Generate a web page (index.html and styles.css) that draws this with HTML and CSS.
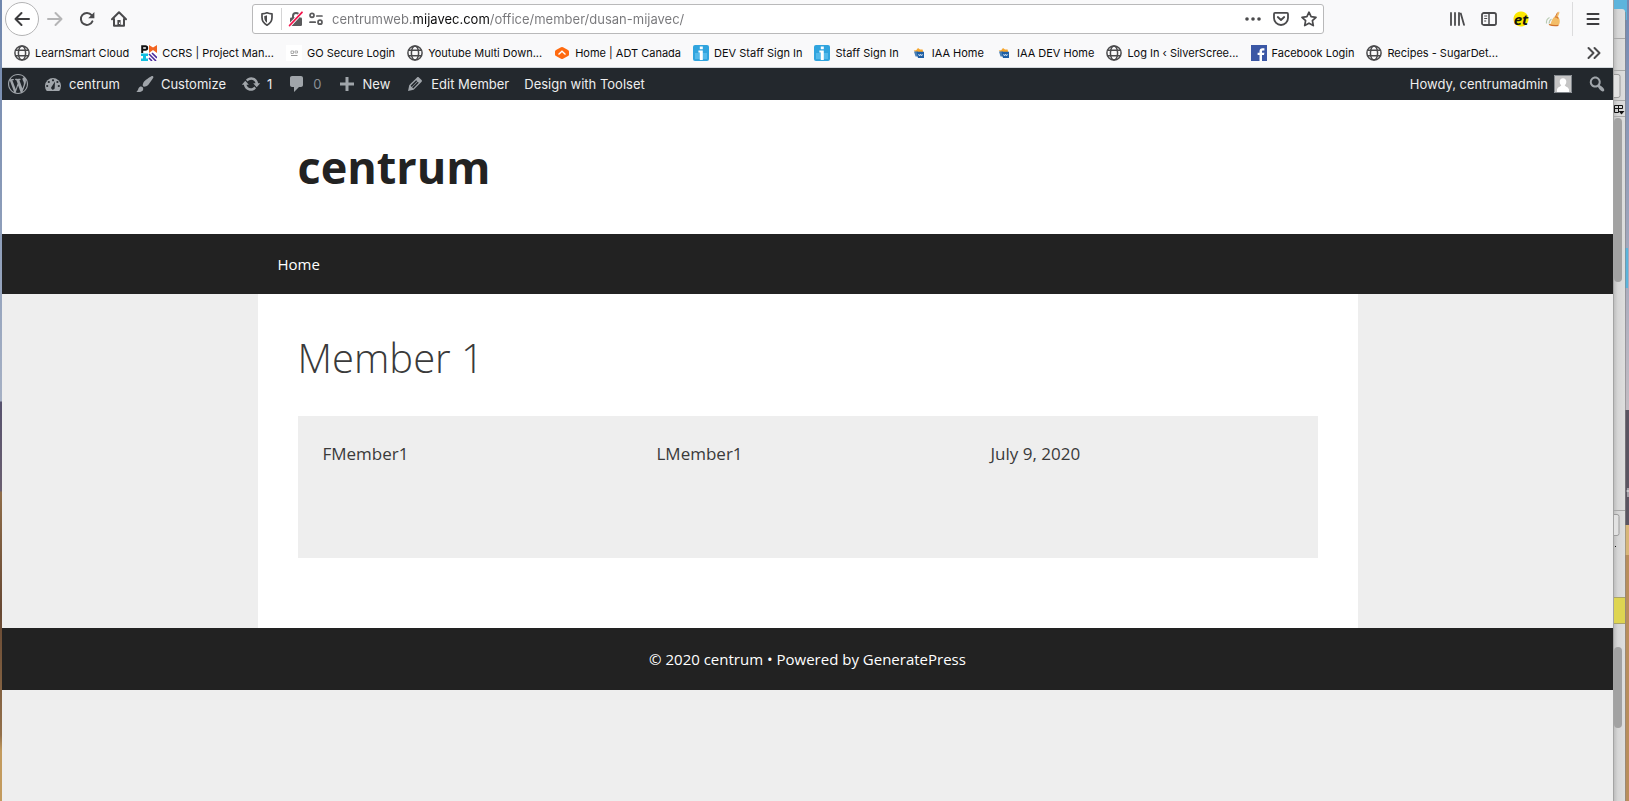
FILE: index.html
```html
<!DOCTYPE html>
<html lang="en">
<head>
  <meta charset="UTF-8">
  <meta name="viewport" content="width=device-width, initial-scale=1.0">
  <title>Member 1 - centrum</title>
  <link rel="stylesheet" href="styles.css">
</head>
<body>
  <svg class="defs" aria-hidden="true">
    <symbol id="globe" viewBox="0 0 16 16">
      <g fill="none" stroke="#4a4a4c" stroke-width="1.5">
        <circle cx="8" cy="8" r="7.1"/>
        <ellipse cx="8" cy="8" rx="3.6" ry="7.1"/>
        <path d="M1.6 5.3h12.8M1.6 10.7h12.8"/>
      </g>
    </symbol>
    <symbol id="info" viewBox="0 0 16 16">
      <rect width="16" height="16" rx="2" fill="#30a4de"/>
      <path d="M2 8h12v6H2z" fill="#53b9ea"/>
      <path d="M6.8 1.6h3v2.6h-3zM5.4 5.6h4.4V15H6.8V7.6H5.4z" fill="#fff"/>
    </symbol>
    <symbol id="iaa" viewBox="0 0 16 16">
      <path d="M7 3l2 1.6 2.6-.2.6 3H5L2.600 5.600l2.600-.4z" fill="#f6a52c"/>
      <path d="M3 6.500h4v5H4.500z" fill="#477fb5"/>
      <path d="M5.500 6.800H13V13H7z" fill="#1f5fa5"/>
      <path d="M7.500 9l1 2 1-2 1 2 1-2" fill="none" stroke="#dce8f4" stroke-width=".8"/>
    </symbol>
  </svg>

  <div class="desktop">
    <div class="browser">
      <div class="toolbar">
        <button class="tool back" aria-label="Back">
          <svg width="16" height="16" viewBox="0 0 16 16"><path d="M15 8H1.500M7.500 2L1.500 8l6 6" fill="none" stroke="#3d3d3f" stroke-width="2" stroke-linecap="round" stroke-linejoin="round"/></svg>
        </button>
        <button class="tool" aria-label="Forward" disabled>
          <svg width="16" height="16" viewBox="0 0 16 16"><path d="M1 8h13.500M8.500 2l6 6-6 6" fill="none" stroke="#b5b5b6" stroke-width="2" stroke-linecap="round" stroke-linejoin="round"/></svg>
        </button>
        <button class="tool" aria-label="Reload">
          <svg width="16" height="16" viewBox="0 0 16 16"><path d="M13.400 10.300A6 6 0 1 1 12.600 4.200" fill="none" stroke="#4a4a4c" stroke-width="2" stroke-linecap="round"/><path d="M15.400 1v6.300H9.200z" fill="#4a4a4c"/></svg>
        </button>
        <button class="tool" aria-label="Home">
          <svg width="16" height="16" viewBox="0 0 16 16"><path d="M1 8.300L8 1.300l7 7M3 8v6.800h10V8" fill="none" stroke="#4a4a4c" stroke-width="2" stroke-linecap="round" stroke-linejoin="round"/><path d="M6.400 9h3.200v6H6.400z" fill="#4a4a4c"/><path d="M8 11.500h1V13H8z" fill="#fff"/></svg>
        </button>
        <span class="spring"></span>
        <div class="urlbar">
          <button class="url-btn shield" aria-label="Tracking protection">
            <svg width="16" height="16" viewBox="0 0 16 16"><path d="M8 1.800c1.700.8 3.300 1 5 1v3.800c0 3.500-1.700 6-5 7.600-3.300-1.600-5-4.100-5-7.600V2.800c1.700 0 3.300-.2 5-1z" fill="none" stroke="#4a4a4c" stroke-width="1.700" stroke-linejoin="round"/><path d="M8 4.300v7.400c-1.800-1.200-2.700-2.900-2.700-5V4.900C6.300 4.900 7.200 4.700 8 4.300z" fill="#4a4a4c"/></svg>
          </button>
          <button class="url-btn" aria-label="Connection is not secure">
            <svg width="16" height="16" viewBox="0 0 16 16"><path d="M5 7V5a3 3 0 0 1 6 0v2" fill="none" stroke="#5a5a5c" stroke-width="2"/><rect x="2" y="6.500" width="12" height="8.500" rx="1.200" fill="#5a5a5c"/><path d="M1.600 14.500L14 1.300" stroke="#fff" stroke-width="3.400"/><path d="M1.600 14.500L14 1.300" stroke="#f3144c" stroke-width="1.800" stroke-linecap="round"/></svg>
          </button>
          <button class="url-btn" aria-label="Permissions">
            <svg width="16" height="16" viewBox="0 0 16 16"><g fill="none" stroke="#5a5a5c" stroke-width="1.700" stroke-linecap="round"><circle cx="4" cy="4.300" r="2"/><path d="M8.800 5h5.200M2 11.200h5.200"/><circle cx="12" cy="11.200" r="2"/></g></svg>
          </button>
          <input class="url" type="text" aria-label="Address" value="centrumweb.mijavec.com/office/member/dusan-mijavec/">
          <button class="url-btn wide" aria-label="Page actions">
            <svg width="16" height="16" viewBox="0 0 16 16" fill="#4a4a4c"><circle cx="2" cy="8" r="1.800"/><circle cx="8" cy="8" r="1.800"/><circle cx="14" cy="8" r="1.800"/></svg>
          </button>
          <button class="url-btn wide" aria-label="Save to Pocket">
            <svg width="16" height="16" viewBox="0 0 16 16" fill="none" stroke="#4a4a4c" stroke-width="1.800" stroke-linecap="round" stroke-linejoin="round"><path d="M2 1.900h12c.6 0 1 .4 1 1V7a7 7 0 0 1-14 0V2.900c0-.6.4-1 1-1z"/><path d="M4.800 6L8 9l3.200-3"/></svg>
          </button>
          <button class="url-btn wide" aria-label="Bookmark this page">
            <svg width="16" height="16" viewBox="0 0 16 16"><path d="M8 1.200l2.100 4.500 4.900.6-3.600 3.400.9 4.900L8 12.200l-4.300 2.400.9-4.900L1 6.300l4.900-.6z" fill="none" stroke="#4a4a4c" stroke-width="1.700" stroke-linejoin="round"/></svg>
          </button>
        </div>
        <span class="spring"></span>
        <button class="tool" aria-label="Library">
          <svg width="16" height="16" viewBox="0 0 16 16"><path d="M2 2v12M6 2v12M10 2v12M11.800 2.500l3.200 11.300" fill="none" stroke="#4a4a4c" stroke-width="1.800" stroke-linecap="round"/></svg>
        </button>
        <button class="tool" aria-label="Sidebars">
          <svg width="16" height="16" viewBox="0 0 16 16"><g fill="none" stroke="#4a4a4c"><rect x="1" y="2" width="14" height="12" rx="1.800" stroke-width="1.800"/><path d="M8 2v12" stroke-width="1.500"/><path d="M3.200 5h3M3.200 7.500h3M3.200 10h2" stroke-width="1.200"/></g></svg>
        </button>
        <button class="tool et" aria-label="Extension et">et</button>
        <button class="tool" aria-label="Cleaner extension">
          <svg width="16" height="16" viewBox="0 0 16 16"><path d="M13.800.6c.6.400.7 1 .5 1.700l-1.300 3.200c1.500 1.700 2.200 4 1.600 6.600-.2 1.200-.8 2-1.600 2.500-3 .7-6.600.4-9.500-.9 1.500-.1 2-.6 2.400-1.600.6-2.800 2-5.600 4.300-6.700z" fill="#f3bd68"/><path d="M9.800 6c1.300-.3 2.700.3 3.400 1.500M4 13.500c3 1.200 6.200 1.500 9.400.9" stroke="#d2732e" stroke-width="1.200" fill="none"/><path d="M12.500 1.500L10.800 5" stroke="#d9813a" fill="none"/><path d="M4.500 6.500c-2 1-3.300 3.200-3 6M6.500 8c-1.700 1-2.400 2.600-2.300 4.600" stroke="#b9cbb4" stroke-width="1.200" fill="none"/></svg>
        </button>
        <button class="tool menu" aria-label="Open menu">
          <svg width="16" height="16" viewBox="0 0 16 16"><path d="M2.500 3h11M2.500 8h11M2.500 13h11" stroke="#3d3d3f" stroke-width="2" stroke-linecap="round"/></svg>
        </button>
      </div>

      <nav class="bookmarks" aria-label="Bookmarks">
        <a href="#"><svg><use href="#globe"/></svg>LearnSmart Cloud</a>
        <a href="#"><svg viewBox="0 0 16 16"><path fill="#fff" d="M0 0h16v16H0z"/><path d="M1.200 8V1.200h3.200a1.700 1.700 0 0 1 0 3.600H1.200" fill="none" stroke="#111" stroke-width="2"/><path d="M8 0l4 2.500L16 0v8l-4-3-4 3z" fill="#f26522"/><path d="M0 8.500h7V11H5v2.500h2V16H0v-2.500h2V11H0z" fill="#12bfe0"/><path d="M8 9l7 7M8 13l3 3M11 8l5 5" stroke="#4a2a9c" stroke-width="1.600"/></svg>CCRS | Project Man...</a>
        <a href="#"><svg viewBox="0 0 16 16"><path fill="#fff" d="M0 0h16v16H0z"/><path d="M5 6h2.500v2.500H5zM9 6h2.500v2H9z" fill="none" stroke="#999" stroke-width=".8"/><path d="M5 10.500h6.500" stroke="#999"/></svg>GO Secure Login</a>
        <a href="#"><svg><use href="#globe"/></svg>Youtube Multi Down...</a>
        <a href="#"><svg viewBox="0 0 16 16"><path d="M7 2.200q1-.5 2 0l5 2.700q1 .5 1 1.600v3q0 1.100-1 1.600l-5 2.700q-1 .5-2 0l-5-2.700q-1-.5-1-1.600v-3q0-1.100 1-1.600z" fill="#ff6a0f"/><path d="M4.500 9.500L8 6.300l3.500 3.200" fill="none" stroke="#fff" stroke-width="1.400"/></svg>Home | ADT Canada</a>
        <a href="#"><svg><use href="#info"/></svg>DEV Staff Sign In</a>
        <a href="#"><svg><use href="#info"/></svg>Staff Sign In</a>
        <a href="#"><svg><use href="#iaa"/></svg>IAA Home</a>
        <a href="#"><svg><use href="#iaa"/></svg>IAA DEV Home</a>
        <a href="#"><svg><use href="#globe"/></svg>Log In ‹ SilverScree...</a>
        <a href="#"><svg viewBox="0 0 16 16"><path fill="#3b57a5" d="M0 0h16v16H0z"/><path d="M8.500 16V10H6.600V7.800h1.900V6.300c0-2 1.100-3 2.900-3H13.400v2.200h-1.200c-1 0-1.200.4-1.200 1.100v1.200h2.400L13 10h-2v6z" fill="#fff"/></svg>Facebook Login</a>
        <a href="#"><svg><use href="#globe"/></svg>Recipes - SugarDet...</a>
        <button class="tool more" aria-label="More bookmarks">
          <svg width="16" height="16" viewBox="0 0 16 16"><path d="M2.500 3l5 5-5 5M8.500 3l5 5-5 5" fill="none" stroke="#4a4a4c" stroke-width="2" stroke-linecap="round" stroke-linejoin="round"/></svg>
        </button>
      </nav>

      <div class="adminbar">
        <a href="#" class="wp" aria-label="About WordPress"><svg viewBox="0 0 20 20"><path d="M20 10c0-5.510-4.490-10-10-10C4.480 0 0 4.490 0 10c0 5.520 4.480 10 10 10 5.510 0 10-4.480 10-10zM7.780 15.370L4.370 6.220c.55-.02 1.170-.08 1.170-.08.5-.06.44-1.130-.06-1.110 0 0-1.450.11-2.370.11-.18 0-.37 0-.58-.01C4.120 2.690 6.870 1.110 10 1.110c2.330 0 4.450.87 6.050 2.340-.68-.11-1.650.39-1.650 1.580 0 .74.45 1.360.9 2.100.35.61.55 1.360.55 2.460 0 1.490-1.400 5-1.400 5l-3.030-8.370c.54-.02.82-.17.82-.17.5-.05.44-1.250-.06-1.220 0 0-1.440.12-2.380.12-.87 0-2.330-.12-2.330-.12-.5-.03-.56 1.200-.06 1.220l.92.08 1.260 3.410zM17.410 10c.24-.64.74-1.870.43-4.250.7 1.290 1.050 2.710 1.050 4.250 0 3.290-1.730 6.240-4.400 7.780.97-2.590 1.940-5.200 2.920-7.780zM6.100 18.090C3.120 16.650 1.110 13.530 1.110 10c0-1.300.23-2.480.72-3.590C3.250 10.300 4.670 14.200 6.100 18.090zm4.030-6.630l2.580 6.980c-.86.29-1.760.45-2.710.45-.79 0-1.570-.11-2.290-.33.81-2.380 1.620-4.740 2.420-7.100z"/></svg></a>
        <a href="#"><svg viewBox="0 0 20 20"><path d="M3.760 17h12.480A8 8 0 1 0 3.760 17z"/><g fill="#23282d"><circle cx="10" cy="6.300" r="1.100"/><circle cx="5.800" cy="8" r="1.100"/><circle cx="4.200" cy="12" r="1.100"/><circle cx="15.800" cy="12" r="1.100"/><circle cx="14.400" cy="8" r="1.100"/><path d="M12 7.500l-.3 6.200a1.800 1.800 0 1 1-2.900-1.300z"/></g></svg>centrum</a>
        <a href="#"><svg viewBox="0 0 20 20"><path d="M18.330 3.570s.27-.8-.31-1.360c-.53-.52-1.220-.24-1.220-.24-.61.3-5.760 3.470-7.670 5.570-.86.96-2.060 3.790-1.090 4.820.92.98 3.960-.17 4.790-1 2.060-2.060 5.210-7.170 5.500-7.790zM1.400 17.650c2.370-1.560 1.460-3.410 3.230-4.640.93-.65 2.220-.62 3.080.29.63.67.8 2.570-.16 3.460-1.570 1.450-4 1.550-6.150.89z"/></svg>Customize</a>
        <a href="#"><svg viewBox="0 0 20 20"><path d="M10.200 3.280c3.530 0 6.430 2.610 6.920 6h2.080l-3.500 4-3.500-4h2.320c-.45-1.970-2.210-3.450-4.320-3.450-1.450 0-2.730.71-3.540 1.780L4.950 5.660C6.230 4.200 8.110 3.280 10.200 3.280zm-.4 13.440c-3.520 0-6.430-2.610-6.920-6H.8l3.500-4c1.170 1.330 2.330 2.670 3.500 4H5.480c.45 1.970 2.210 3.450 4.320 3.450 1.450 0 2.730-.71 3.540-1.780l1.710 1.950c-1.280 1.460-3.150 2.380-5.250 2.380z"/></svg>1</a>
        <a href="#" class="muted"><svg viewBox="0 0 20 20"><path d="M5 2h9c1.100 0 2 .9 2 2v7c0 1.100-.9 2-2 2h-2l-5 5v-5H5c-1.100 0-2-.9-2-2V4c0-1.100.9-2 2-2z"/></svg>0</a>
        <a href="#"><svg viewBox="0 0 20 20"><path d="M8.500 3h3v5.500H17v3h-5.500V17h-3v-5.500H3v-3h5.500z"/></svg>New</a>
        <a href="#"><svg viewBox="0 0 20 20"><path d="M13.890 3.390l2.710 2.720c.46.46.42 1.240.03 1.640l-8.010 8.020-5.560 1.160 1.160-5.580s7.600-7.630 7.990-8.030c.39-.39 1.220-.39 1.680.07zm-2.730 2.790l-5.590 5.610 1.110 1.110 5.540-5.650zm-2.970 8.230l5.580-5.600-1.070-1.080-5.590 5.600z"/></svg>Edit Member</a>
        <a href="#">Design with Toolset</a>
        <a href="#" class="account">Howdy, centrumadmin
          <svg class="avatar" viewBox="0 0 18 18"><path fill="#c5c5c5" d="M0 0h18v18H0z"/><path d="M9 3.200c2 0 3.300 1.400 3.300 3.500 0 1.500-.6 2.800-1.500 3.500 0 1.400 3.700 1.500 4.200 4.400V17H3v-2.400c.5-2.900 4.200-3 4.200-4.400-.9-.7-1.500-2-1.500-3.500 0-2.100 1.300-3.500 3.300-3.500z" fill="#fff"/><path d="M.5.5h17v17H.5z" fill="none" stroke="#82878c"/></svg>
        </a>
        <button class="search" aria-label="Search">
          <svg viewBox="0 0 20 20"><path d="M12.140 4.180c1.870 1.870 2.110 4.750.72 6.890.12.1.22.21.36.31.2.16.47.36.81.59.34.24.56.39.66.47.42.31.73.57.94.78.32.32.6.65.84 1 .25.35.44.69.59 1.040.14.35.21.68.18 1-.02.32-.14.59-.36.81s-.49.34-.81.36c-.31.02-.65-.04-.99-.19-.35-.14-.7-.34-1.040-.59-.35-.24-.68-.52-1-.84-.21-.21-.47-.52-.77-.93-.1-.13-.25-.35-.47-.66-.22-.32-.4-.57-.56-.78-.16-.2-.29-.35-.44-.5-2.070 1.090-4.690.76-6.440-.98-2.140-2.150-2.140-5.640 0-7.780 2.150-2.150 5.630-2.150 7.780 0zm-1.410 6.360c1.360-1.370 1.360-3.580 0-4.950-1.370-1.370-3.590-1.370-4.950 0-1.370 1.370-1.370 3.580 0 4.950 1.360 1.370 3.580 1.370 4.950 0z"/></svg>
        </button>
      </div>

      <div class="page">
        <header class="site-header">
          <div class="container">
            <a href="#" class="site-title">centrum</a>
          </div>
        </header>
        <nav class="main-nav">
          <div class="container">
            <a href="#">Home</a>
          </div>
        </nav>
        <main class="container content">
          <h1>Member 1</h1>
          <div class="member-grid">
            <div>FMember1</div>
            <div>LMember1</div>
            <div>July 9, 2020</div>
          </div>
        </main>
        <footer class="site-info">
          © 2020 centrum • Powered by <a href="#">GeneratePress</a>
        </footer>
      </div>
    </div>

    <!-- edge of the windows behind the browser -->
    <svg class="behind" width="16" height="801" viewBox="0 0 16 801" aria-hidden="true">
      <defs>
        <linearGradient id="sky" x2="0" y2="1"><stop offset="0" stop-color="#7288b2"/><stop offset="1" stop-color="#c3bcc3"/></linearGradient>
        <linearGradient id="edge"><stop offset="0" stop-color="#b9b9b9"/><stop offset=".4" stop-color="#d6d6d6"/><stop offset="1" stop-color="#dedede"/></linearGradient>
      </defs>
      <path fill="url(#sky)" d="M0 0h16v410H0z"/>
      <path fill="#5b5562" d="M12 410h4v115h-4z"/>
      <path fill="#b98e5c" d="M12 525h4v276h-4z"/>
      <path fill="#d8b679" d="M12 525h4v30h-4z"/>
      <path fill="#5db4dc" d="M0 0h14v20H0zM12 248h3v40h-3z"/>
      <path fill="url(#edge)" d="M0 9h9q3 0 3 3v789H0z"/>
      <path d="M0 38.500h12M0 70.500h12M0 100.500h12M0 116.500h12M0 510.500h12" stroke="#a9a9a9"/>
      <path d="M0 74.500h5q2 0 2 2v19q0 2-2 2H0M0 514.500h4q2 0 2 2v17q0 2-2 2H0" fill="#e2e2e2" stroke="#9c9c9c"/>
      <path d="M1.500 105.500h8v3M1.500 105.500v7h4M1.500 108.500h8M5.500 105.500v7" fill="none" stroke="#111"/>
      <path d="M5.500 111h6l-3 3.500z" fill="#111"/>
      <rect x="1" y="118" width="8" height="164" rx="4" fill="#a2a2a2"/>
      <path fill="#ded551" d="M0 597h12v27H0z"/>
      <path d="M0 597.500h12M0 623.500h12" stroke="#aaa468"/>
      <rect x="1" y="647" width="8" height="81" rx="4" fill="#a2a2a2"/>
      <path fill="#111" d="M2 546h1v1H2z"/>
      <path d="M13.500 491h2.500M15 488v9" stroke="#eee"/>
      <path d="M.5 0v801" stroke="#a4a4a4"/>
      <path d="M12.500 12v789" stroke="#858585" stroke-opacity=".6"/>
    </svg>
  </div>
</body>
</html>
```

FILE: styles.css
```css
* {
  box-sizing: border-box;
}
body {
  margin: 0;
  font-family: "Open Sans", sans-serif;
  color: #3a3a3a;
}
a {
  color: inherit;
  text-decoration: none;
}
button {
  padding: 0;
  border: none;
  background: none;
  font: inherit;
}
svg {
  flex: none;
}
.defs {
  position: absolute;
  width: 0;
  height: 0;
}

/* desktop and window */
.desktop {
  display: flex;
  min-height: 100vh;
  padding-left: 2px;
  background: linear-gradient(#6f86ad 0, #a5b0c4 401px, #57526e 402px, #6a5f70 491px, #8f6d49 492px, #674833 610px, #93704a 735px, #c39b5e 751px);
}
.browser {
  flex: 1;
  min-width: 0;
  display: flex;
  flex-direction: column;
}
.behind {
  display: block;
}

/* toolbar */
.toolbar {
  display: flex;
  align-items: center;
  height: 38px;
  padding: 0 0 0 3px;
  background: #f9f9fa;
}
.tool {
  display: flex;
  align-items: center;
  justify-content: center;
  flex: none;
  width: 32px;
  height: 34px;
}
.back {
  width: 34px;
  border: 1px solid #b4b4b5;
  border-radius: 50%;
  background: #fff;
}
.spring {
  flex: 0 1 117px;
}
.urlbar {
  display: flex;
  align-items: center;
  flex: 1;
  height: 30px;
  border: 1px solid #b9b9ba;
  border-radius: 3px;
  background: #fff;
}
.url-btn {
  display: flex;
  align-items: center;
  justify-content: center;
  flex: none;
  width: 20px;
  height: 22px;
}
.url-btn.wide {
  width: 28px;
}
.url-btn.shield {
  width: 29px;
  margin-right: 4px;
  border-right: 1px solid #d4d4d5;
}
.url {
  flex: 1;
  min-width: 0;
  margin-left: 6px;
  padding: 0;
  border: none;
  outline: none;
  font: 13px Inter, sans-serif;
  /* the domain is darker than the rest of the address */
  color: transparent;
  background: linear-gradient(90deg, #77777a 81px, #0c0c0d 81px, #0c0c0d 158px, #77777a 158px);
  background-clip: text;
  -webkit-background-clip: text;
}
.et {
  background: radial-gradient(circle, #fbe800 7px, transparent 8px);
  font: italic bold 15px "Open Sans", sans-serif;
  color: #111;
}
.menu {
  width: 41px;
  margin-left: 3px;
  border-left: 1px solid #dcdcdd;
}

/* bookmarks */
.bookmarks {
  display: flex;
  align-items: center;
  height: 30px;
  padding: 0 3px 0 12px;
  border-bottom: 1px solid #d3d8dc;
  background: #f9f9fa;
  font: 11px Inter, sans-serif;
  color: #0c0c0d;
  gap: 12px;
}
.bookmarks a {
  display: flex;
  align-items: center;
  gap: 5px;
  white-space: nowrap;
}
.bookmarks a svg {
  width: 16px;
  height: 16px;
}
.more {
  margin-left: auto;
}

/* wordpress admin bar */
.adminbar {
  display: flex;
  align-items: center;
  height: 32px;
  padding: 0 6px;
  background: #23282d;
  font: 13px Inter, sans-serif;
  color: #eee;
  gap: 15px;
}
.adminbar a {
  display: flex;
  align-items: center;
  gap: 6px;
  white-space: nowrap;
}
.adminbar svg {
  width: 20px;
  height: 20px;
  fill: #a0a5aa;
}
.adminbar .muted {
  color: #8b9095;
}
.adminbar .account {
  margin-left: auto;
}
.adminbar .avatar {
  width: 18px;
  height: 18px;
}
.search {
  display: flex;
}

/* site */
.page {
  flex: 1;
  background: #eee;
}
.container {
  width: 100%;
  max-width: 1100px;
  margin: 0 auto;
}
.site-header {
  background: #fff;
}
.site-header .container {
  padding: 40px;
}
.site-title {
  display: block;
  font-size: 45px;
  line-height: 54px;
  font-weight: 700;
  color: #222;
}
.main-nav {
  background: #222;
  font-size: 15px;
  line-height: 60px;
  font-weight: 500;
  color: #fff;
}
.main-nav a {
  display: inline-block;
  padding: 0 20px;
}
.content {
  padding: 40px 40px 70px;
  background: #fff;
}
.content h1 {
  margin: 0 0 34px;
  font-size: 40px;
  line-height: 48px;
  font-weight: 300;
}
.member-grid {
  display: grid;
  grid-template-columns: repeat(3, 1fr);
  gap: 32px;
  min-height: 142px;
  padding: 25px;
  background: #eee;
  font-size: 17px;
  line-height: 26px;
}
.site-info {
  padding: 20px;
  background: #222;
  font-size: 15px;
  line-height: 22px;
  font-weight: 500;
  text-align: center;
  color: #fff;
}
```
